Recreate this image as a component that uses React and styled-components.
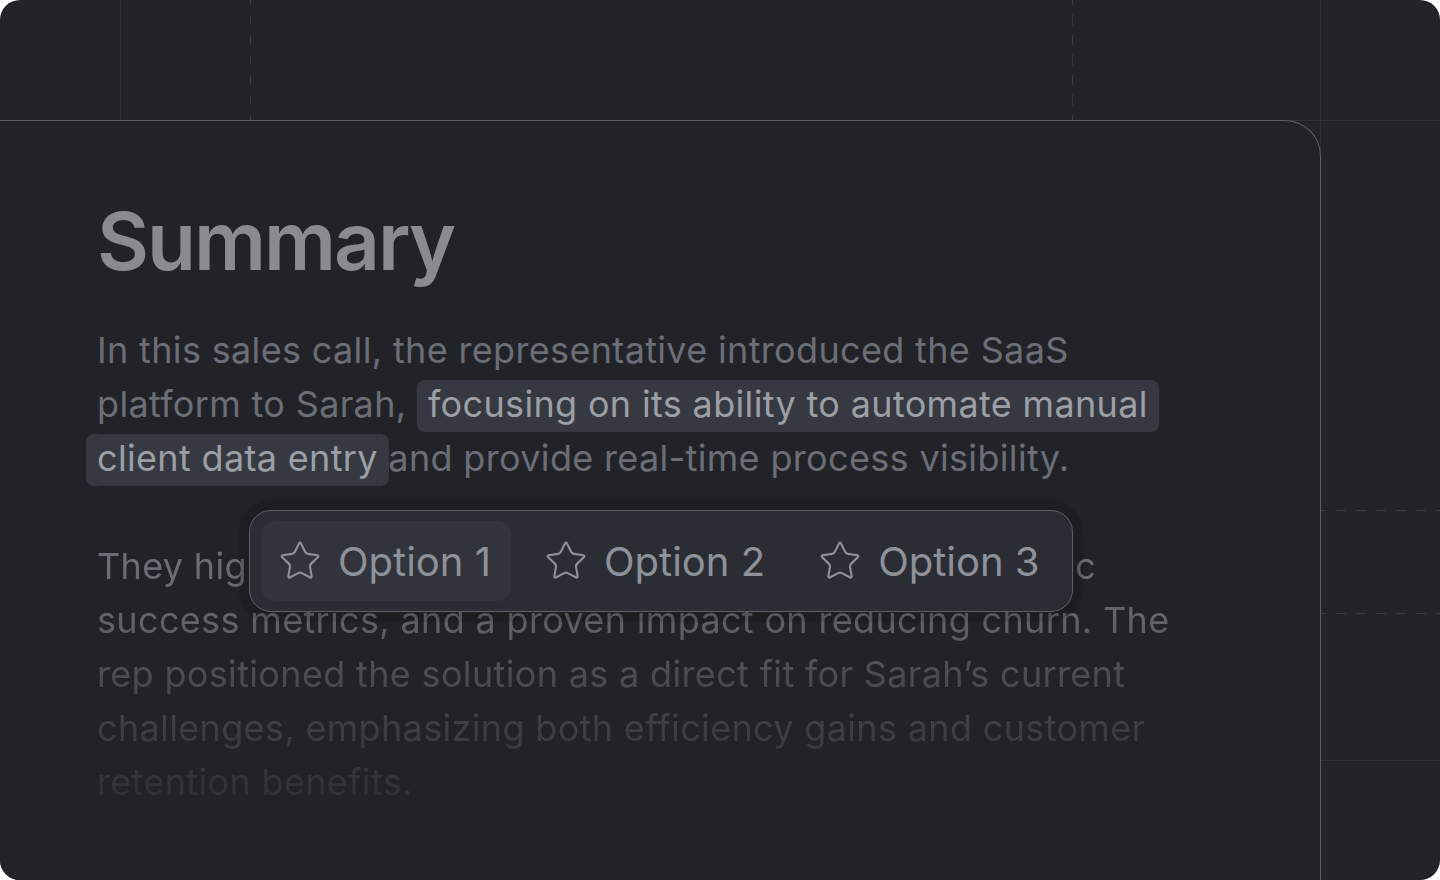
import styled, { createGlobalStyle } from 'styled-components';
import { Star } from 'lucide-react';

const GlobalStyle = createGlobalStyle`
  html, body {
    margin: 0;
    padding: 0;
    background: #ffffff;
  }
  * {
    box-sizing: border-box;
  }
`;

const dash = (dir, color) =>
  `repeating-linear-gradient(${dir}, ${color} 0 5px, transparent 5px 15px, ${color} 15px 20px)`;

const Frame = styled.div`
  width: 1440px;
  height: 880px;
  border-radius: 20px;
  overflow: hidden;
  background: #232429;
  display: flex;
  flex-direction: column;
  font-family: Inter, "Noto Sans", sans-serif;
`;

const TopBand = styled.div`
  height: 120px;
  display: flex;
  flex-shrink: 0;
`;

const Cell = styled.div`
  width: ${(p) => (p.$w ? `${p.$w}px` : 'auto')};
  flex: ${(p) => (p.$w ? '0 0 auto' : '1')};
`;

const VLine = styled.div`
  width: 1px;
  flex-shrink: 0;
  background: ${(p) => (p.$dashed ? dash('to bottom', '#393b42') : '#303238')};
`;

const HLine = styled.div`
  height: 1px;
  flex-shrink: 0;
  background: ${(p) => (p.$dashed ? dash('to right', '#393b42') : '#303238')};
`;

const Main = styled.div`
  flex: 1;
  display: flex;
  border-top: 1px solid #303238;
`;

const Card = styled.section`
  position: relative;
  z-index: 1;
  width: 1321px;
  margin-top: -1px;
  margin-right: -1px;
  flex-shrink: 0;
  background: #222328;
  border-top: 1px solid #5b5f68;
  border-right: 1px solid #5b5f68;
  border-top-right-radius: 36px;
  padding: 76px 120px 0 97px;
`;

const Side = styled.aside`
  flex: 1;
  display: flex;
  flex-direction: column;
  border-left: 1px solid #303238;
`;

const Seg = styled.div`
  height: ${(p) => p.$h}px;
  flex-shrink: 0;
`;

const Title = styled.h1`
  margin: 0;
  font-size: 80px;
  line-height: 88px;
  font-weight: 600;
  letter-spacing: -2px;
  color: #898b91;
`;

const Para = styled.p`
  margin: 38px 0 0;
  max-width: 1100px;
  font-size: 36px;
  line-height: 54px;
  font-weight: 400;
  letter-spacing: 0.34px;
  color: #6b6e76;
`;

const FadePara = styled(Para)`
  margin-top: 54px;
  -webkit-mask-image: linear-gradient(
    to bottom,
    #000 0px,
    #000 28px,
    rgba(0, 0, 0, 0.86) 82px,
    rgba(0, 0, 0, 0.55) 136px,
    rgba(0, 0, 0, 0.36) 190px,
    rgba(0, 0, 0, 0.22) 244px,
    rgba(0, 0, 0, 0.18) 270px
  );
  mask-image: linear-gradient(
    to bottom,
    #000 0px,
    #000 28px,
    rgba(0, 0, 0, 0.86) 82px,
    rgba(0, 0, 0, 0.55) 136px,
    rgba(0, 0, 0, 0.36) 190px,
    rgba(0, 0, 0, 0.22) 244px,
    rgba(0, 0, 0, 0.18) 270px
  );
`;

const MarkGap = styled.span`
  display: inline-block;
  width: 11px;
`;

const Mark = styled.mark`
  padding: 2px 0 6px;
  border-radius: 8px;
  background: #363942;
  color: #9c9fa6;
  box-shadow: -11px 0 0 #363942, 11px 0 0 #363942;
  -webkit-box-decoration-break: clone;
  box-decoration-break: clone;
`;

const Toolbar = styled.div`
  position: absolute;
  left: 249px;
  top: 389px;
  display: flex;
  gap: 16px;
  padding: 10px 12px 10px 11px;
  border: 1.5px solid #5c6069;
  border-radius: 22px;
  background: #2b2d35;
  box-shadow: 0 0 2px 10px rgba(0, 0, 0, 0.14);
`;

const OptionButton = styled.button`
  height: 80px;
  display: flex;
  align-items: center;
  gap: 16px;
  padding: 0 20px 0 17px;
  border: none;
  border-radius: 14px;
  background: ${(p) => (p.$active ? '#31343c' : 'transparent')};
  color: #8e9199;
  font-family: inherit;
  font-size: 40px;
  font-weight: 400;
  cursor: pointer;
`;

const options = ['Option 1', 'Option 2', 'Option 3'];

export default function App() {
  return (
    <>
      <GlobalStyle />
      <Frame>
        <TopBand>
          <Cell $w={120} />
          <VLine />
          <Cell $w={129} />
          <VLine $dashed />
          <Cell />
          <VLine $dashed />
          <Cell $w={247} />
          <VLine />
          <Cell $w={119} />
        </TopBand>
        <Main>
          <Card>
            <Title>Summary</Title>
            <Para>
              In this sales call, the representative introduced the SaaS platform to Sarah,{' '}
              <MarkGap />
              <Mark>focusing on its ability to automate manual client data entry</Mark> and provide
              real-time process visibility.
            </Para>
            <FadePara>
              They highlighted flawless CRM integration, client-specific success metrics, and a
              proven impact on reducing churn. The rep positioned the solution as a direct fit for
              Sarah’s current challenges, emphasizing both efficiency gains and customer retention
              benefits.
            </FadePara>
            <Toolbar>
              {options.map((label, i) => (
                <OptionButton key={label} $active={i === 0}>
                  <Star size={44} strokeWidth={1.15} />
                  {label}
                </OptionButton>
              ))}
            </Toolbar>
          </Card>
          <Side>
            <Seg $h={389} />
            <HLine $dashed />
            <Seg $h={102} />
            <HLine $dashed />
            <Seg $h={146} />
            <HLine />
          </Side>
        </Main>
      </Frame>
    </>
  );
}
